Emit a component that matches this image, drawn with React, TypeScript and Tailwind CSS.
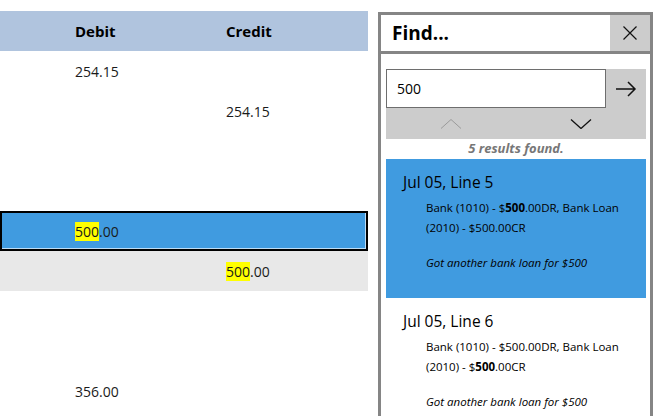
import React from 'react';

interface Row {
  debit?: React.ReactNode;
  credit?: React.ReactNode;
  kind?: 'selected' | 'alt';
}

const Hit: React.FC<{ text: string }> = ({ text }) => (
  <span className="bg-[#ffff00]">{text}</span>
);

const rows: Row[] = [
  { debit: '254.15' },
  { credit: '254.15' },
  {},
  {},
  { debit: <><Hit text="500" />.00</>, kind: 'selected' },
  { credit: <><Hit text="500" />.00</>, kind: 'alt' },
  {},
  {},
  { debit: '356.00' },
];

interface Result {
  title: string;
  detail: React.ReactNode;
  memo: string;
  active?: boolean;
}

const results: Result[] = [
  {
    title: 'Jul 05, Line 5',
    detail: (
      <>
        Bank (1010) - $<b>500</b>.00DR, Bank Loan (2010) - $500.00CR
      </>
    ),
    memo: 'Got another bank loan for $500',
    active: true,
  },
  {
    title: 'Jul 05, Line 6',
    detail: (
      <>
        Bank (1010) - $500.00DR, Bank Loan (2010) - $<b>500</b>.00CR
      </>
    ),
    memo: 'Got another bank loan for $500',
  },
];

const LedgerTable: React.FC = () => (
  <div className="w-[368px] shrink-0 pt-[11px] text-[14px] text-[#1a1a1a]">
    <div className="flex h-[40px] items-center bg-[#b0c4de] text-[15px] font-bold text-black">
      <div className="w-[75px]" />
      <div className="w-[151px]">Debit</div>
      <div className="flex-1">Credit</div>
    </div>
    {rows.map((row, i) => (
      <div
        key={i}
        className={`flex h-[40px] items-center ${
          row.kind === 'selected'
            ? 'border-2 border-black bg-[#409be0] shadow-[inset_-1px_-1px_0_#bcdcf5]'
            : row.kind === 'alt'
            ? 'bg-[#e8e8e8]'
            : ''
        }`}
      >
        <div className={row.kind === 'selected' ? 'w-[73px]' : 'w-[75px]'} />
        <div className="w-[151px]">{row.debit}</div>
        <div className="flex-1">{row.credit}</div>
      </div>
    ))}
  </div>
);

const FindPanel: React.FC = () => (
  <div className="mt-[12px] flex h-[420px] w-[275px] shrink-0 flex-col border-x-[3px] border-t-[3px] border-[#858585]">
    <div className="flex h-[39px] shrink-0 items-center border-b-[3px] border-[#858585]">
      <div className="flex-1 pl-[11px] text-[19px] font-bold text-black">Find...</div>
      <button className="flex h-full w-[40px] items-center justify-center bg-[#cccccc]">
        <svg width="16" height="16" viewBox="0 0 16 16" fill="none" stroke="#111" strokeWidth="1.2">
          <path d="M1.5 1.5 L14.5 14.5 M14.5 1.5 L1.5 14.5" />
        </svg>
      </button>
    </div>

    <div className="px-[5px] pr-[4px] pt-[15px]">
      <div className="bg-[#cccccc]">
        <div className="flex h-[39px]">
          <div className="flex flex-1 items-center border border-[#6e6e6e] bg-white pl-[10px] text-[14px] text-black">
            500
          </div>
          <button className="flex w-[40px] items-center justify-center">
            <svg width="22" height="16" viewBox="0 0 22 16" fill="none" stroke="#111" strokeWidth="1.5">
              <path d="M1 8 H20 M13 1 L20 8 L13 15" />
            </svg>
          </button>
        </div>
        <div className="flex h-[31px] items-center">
          <div className="flex w-[130px] justify-center">
            <svg width="22" height="10" viewBox="0 0 22 10" fill="none" stroke="#9a9a9a" strokeWidth="1">
              <path d="M1 9.5 L11 0.5 L21 9.5" />
            </svg>
          </div>
          <div className="flex w-[130px] justify-center">
            <svg width="22" height="10" viewBox="0 0 22 10" fill="none" stroke="#111" strokeWidth="1.3">
              <path d="M1 0.5 L11 9.5 L21 0.5" />
            </svg>
          </div>
        </div>
      </div>

      <div className="flex h-[20px] items-center justify-center text-[13px] font-bold italic text-[#777777]">
        5 results found.
      </div>

      {results.map((r, i) => (
        <div
          key={i}
          className={`h-[139px] pl-[17px] pr-[12px] pt-[12px] text-black ${r.active ? 'bg-[#409be0]' : ''}`}
        >
          <div className="text-[15.5px] leading-[22px]">{r.title}</div>
          <div className="mt-[5px] pl-[23px] text-[11.5px] leading-[20px]">{r.detail}</div>
          <div className="mt-[15px] pl-[23px] text-[11.5px] italic leading-[20px]">{r.memo}</div>
        </div>
      ))}
    </div>
  </div>
);

export default function App() {
  return (
    <div
      className="flex h-[416px] w-[663px] gap-[10px] overflow-hidden bg-white"
      style={{ fontFamily: '"Open Sans", "Noto Sans", sans-serif' }}
    >
      <LedgerTable />
      <FindPanel />
    </div>
  );
}
